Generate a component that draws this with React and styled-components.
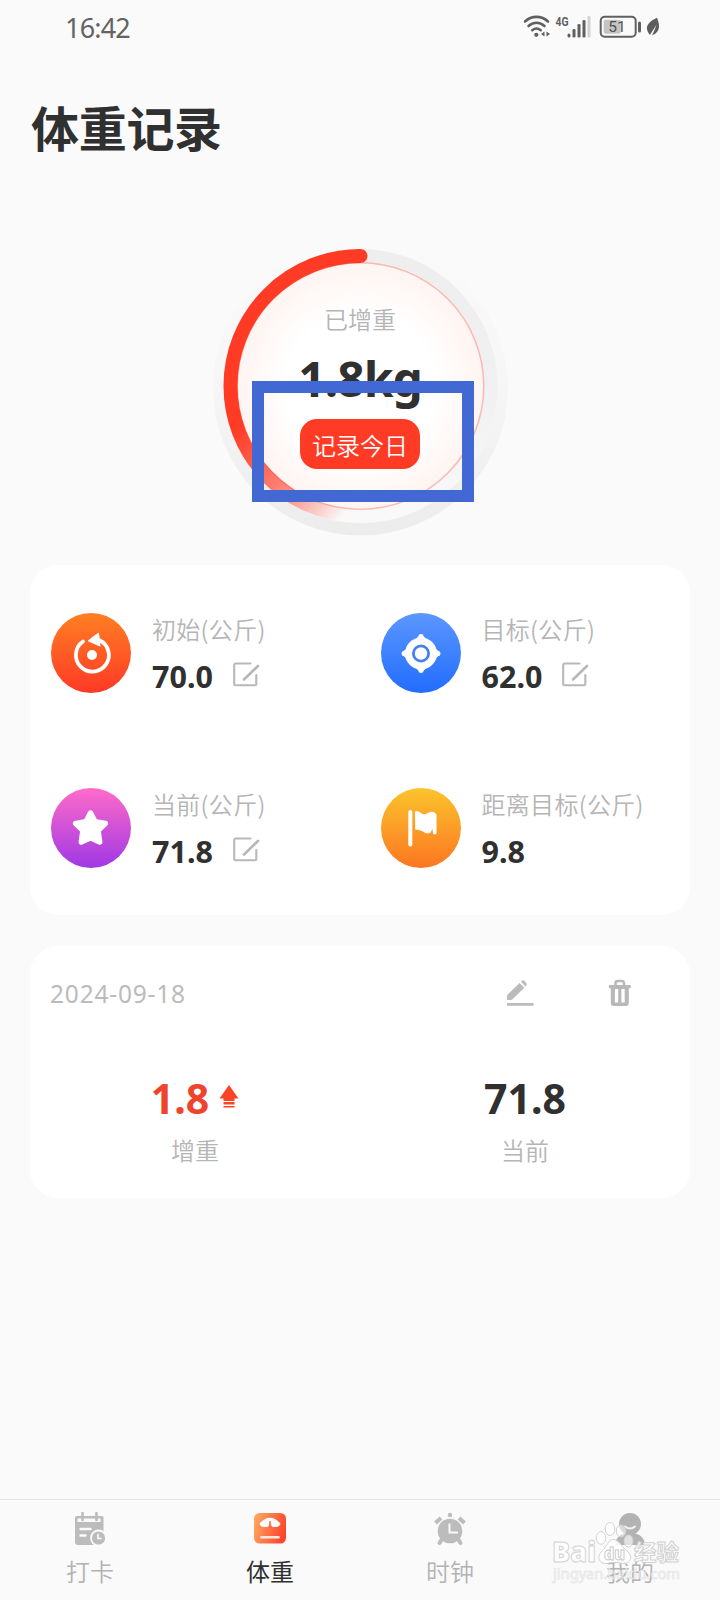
import styled, { createGlobalStyle } from "styled-components";

const GlobalStyle = createGlobalStyle`
    * {
        box-sizing: border-box;
        margin: 0;
        padding: 0;
    }

    body {
        background-color: #fafafa;
        font-family: "Noto Sans", "Noto Sans CJK SC", sans-serif;
        color: #303030;
    }
`;

const WifiIcon = () => (
  <svg width="28" height="24" viewBox="0 0 28 24" fill="none" stroke="#606060" strokeWidth="2.6" strokeLinecap="round">
    <path d="M2 6.5C8.5.3 18.5.3 25 6.5" />
    <path d="M5.5 11C10.300 6.700 16.700 6.700 21.500 11" />
    <path d="M9.300 15.200C12 13 15 13 17.700 15.200" />
    <circle cx="13.300" cy="19.800" r="2.100" fill="#606060" stroke="none" />
    <path d="M21.500 16.500v5l-3.500-2.500zM23.500 16.500v5l3.500-2.500z" fill="#606060" stroke="none" />
  </svg>
);

const SignalIcon = () => (
  <svg width="36" height="24" viewBox="0 0 36 24" overflow="visible">
    <text x="0.500" y="10.500" fontFamily="Roboto, sans-serif" fontWeight="700" fontSize="12.500" textLength="13" lengthAdjust="spacingAndGlyphs" fill="#606060">4G</text>
    <g fill="#606060">
      <rect x="12.500" y="18.500" width="3" height="4" rx="1.500" />
      <rect x="17.500" y="14" width="3" height="8.500" rx="1.300" />
      <rect x="22.500" y="9" width="3" height="13.500" rx="1.300" />
      <rect x="27.500" y="5" width="3" height="17.500" rx="1.300" />
    </g>
    <rect x="32.500" y="1" width="3" height="21.500" rx="1.300" fill="#d2d2d2" />
  </svg>
);

const BatteryIcon = () => (
  <svg width="43" height="24" viewBox="0 0 43 24">
    <rect x="1.700" y="1.700" width="35" height="20" rx="4" fill="none" stroke="#606060" strokeWidth="2" />
    <rect x="4.700" y="4.700" width="17" height="14" rx="2" fill="#c4c4c4" />
    <rect x="39" y="6.500" width="3" height="11" rx="1.500" fill="#606060" />
    <text x="18" y="17" textAnchor="middle" fontFamily="Roboto, sans-serif" fontSize="15.500" fontWeight="400" fill="#505050">51</text>
  </svg>
);

const LeafIcon = () => (
  <svg width="14" height="20" viewBox="0 0 14 20">
    <path d="M11 .8C14 8 14.500 15 6 18.500 8 14 9.500 11 10.500 7.500 8.500 11.500 6 14 4 18 -2 11 1 5.500 11 .8z" fill="#5d5d5d" />
  </svg>
);

const GaugeDrawing = () => (
  <svg width="300" height="300" viewBox="210 240 300 300">
    <defs>
      <linearGradient id="halo" x1="0" y1="0" x2="0" y2="1">
        <stop offset="0" stopColor="#fafafa" />
        <stop offset=".5" stopColor="#f6f6f6" />
        <stop offset="1" stopColor="#ececec" />
      </linearGradient>
      <linearGradient id="track" x1="0" y1="0" x2="0" y2="1">
        <stop offset="0" stopColor="#eeeeee" />
        <stop offset=".55" stopColor="#f1f1f1" />
        <stop offset="1" stopColor="#f9f9f9" />
      </linearGradient>
      <linearGradient id="progress" gradientUnits="userSpaceOnUse" x1="240" y1="425" x2="346" y2="512">
        <stop offset="0" stopColor="#ff3b25" />
        <stop offset=".6" stopColor="#ff3b25" stopOpacity=".55" />
        <stop offset="1" stopColor="#ff3b25" stopOpacity="0" />
      </linearGradient>
      <radialGradient id="face">
        <stop offset="0" stopColor="#ffffff" />
        <stop offset=".6" stopColor="#ffffff" />
        <stop offset="1" stopColor="#fff4f1" />
      </radialGradient>
    </defs>
    <circle cx="360.500" cy="388" r="147.500" fill="url(#halo)" />
    <circle cx="360.500" cy="386" r="130" fill="none" stroke="url(#track)" strokeWidth="14" />
    <circle cx="360.500" cy="386" r="123.300" fill="url(#face)" stroke="#fbb9b2" strokeWidth="1.500" />
    <path d="M360.500 256A130 130 0 0 0 230.500 386A130 130 0 0 0 354 515.800" fill="none" stroke="url(#progress)" strokeWidth="14" />
    <circle cx="360.500" cy="256" r="7" fill="#ff3b25" />
  </svg>
);

const EditIcon = () => (
  <svg width="27" height="25" viewBox="0 0 27 25" fill="none" stroke="#b8b8b8" strokeWidth="2.1" strokeLinecap="round" strokeLinejoin="round">
    <path d="M17.500 1.500H2.500Q1.200 1.500 1.200 3v19q0 1.300 1.300 1.300h19.500q1.300 0 1.300-1.300V13" />
    <path d="M11 17.500L25 4" strokeWidth="2.600" />
  </svg>
);

const StartGlyph = () => (
  <svg width="80" height="80" viewBox="0 0 80 80">
    <path d="M32 28.500A16.500 16.500 0 1 0 48.500 27.200" fill="none" stroke="#fff" strokeWidth="3.800" strokeLinecap="round" />
    <path d="M37.500 27L46.800 20Q48 19.300 48.100 20.700L49.500 32.500Q49.500 34 48.200 33.300L37.500 28.500Q36.500 27.800 37.500 27z" fill="#fff" />
    <circle cx="41" cy="42" r="5" fill="#fff" />
  </svg>
);

const TargetGlyph = () => (
  <svg width="80" height="80" viewBox="0 0 80 80">
    <circle cx="40" cy="40.500" r="16" fill="#fff" />
    <path d="M37.500 23q0-2 2.500-2t2.500 2l4 5h-13zM37.500 58q0 2 2.500 2t2.500-2l4-5h-13zM22.500 38q-2 0-2 2.500t2 2.500l5 4V34zM57.500 38q2 0 2 2.500t-2 2.500l-5 4V34z" fill="#fff" />
    <circle cx="40" cy="40.500" r="7.600" fill="none" stroke="#4580f2" strokeWidth="2.800" />
  </svg>
);

const StarGlyph = () => (
  <svg width="80" height="80" viewBox="0 0 80 80">
    <path d="M39.500 25L44 33.800 54.300 35.500 47 42.500 48.700 54 39.500 49.800 30.300 54 32 42.500 24.700 35.500 35 33.800z" fill="#fff" stroke="#fff" strokeWidth="5.500" strokeLinejoin="round" />
  </svg>
);

const FlagGlyph = () => (
  <svg width="80" height="80" viewBox="0 0 80 80" fill="#fff">
    <rect x="27.300" y="22" width="4" height="36.500" rx="2" />
    <path d="M34 23.500C38 21 40 27.500 45 26 48 24.500 52 21.500 55.500 26.500V45.500Q54 47.500 52 45.500L51.500 41 49.500 44.500Q46 47 42 43.500 38 41.500 34.200 41.500z" />
  </svg>
);

const PencilIcon = () => (
  <svg width="28" height="28" viewBox="0 0 28 28" fill="#bbbbbb">
    <path d="M1 20.500V16.300L13.600 4 18.400 8.800 6 20.800Q1 21.500 1 20.500z" />
    <path d="M15 2.700Q16.500.4 18.300 1.700L20.300 4Q21.300 6 19.500 7.500z" />
    <rect x="1" y="24" width="26.500" height="2.800" rx=".5" />
  </svg>
);

const TrashIcon = () => (
  <svg width="24" height="28" viewBox="0 0 24 28">
    <path d="M7.500 7V4.500Q7.500 2 9.500 2h4.500q2 0 2 2.500V7" fill="none" stroke="#b8b8b8" strokeWidth="2.600" />
    <rect x=".8" y="6" width="22" height="3.200" rx="1" fill="#b8b8b8" />
    <path d="M2.800 8h18v16q0 3-3 3H5.800q-3 0-3-3z" fill="#b8b8b8" />
    <path d="M6.900 10h3.300v13.500H6.900zM13.400 10h3.300v13.500h-3.300z" fill="#fff" />
  </svg>
);

const UpArrow = () => (
  <svg width="20" height="24" viewBox="0 0 20 24" fill="#fb4325">
    <path d="M10 0L19.500 13.500H.5z" />
    <path d="M4.500 12h11v4h-11zM4.500 17h11v2.400h-11zM4.500 21h11v1.500h-11z" />
  </svg>
);

const CalendarIcon = () => (
  <svg width="32" height="34" viewBox="0 0 32 34">
    <path d="M3 4h25q1.500 0 1.500 1.500V30q0 3-2 3H4q-3 0-3-3V5.500Q1 4 3 4z" fill="#bcbcbc" />
    <path d="M3.500 6.500h23V10h-23z" fill="#fafafa" />
    <path d="M8.500 1v7M22.500 1v7" stroke="#bcbcbc" strokeWidth="2.600" strokeLinecap="round" />
    <path d="M6.500 17h10M6.500 23.500h5" stroke="#fafafa" strokeWidth="2.400" strokeLinecap="round" />
    <circle cx="24.500" cy="26" r="7.500" fill="#bcbcbc" stroke="#fafafa" strokeWidth="1.800" />
    <path d="M24 22v4.500h3.500" fill="none" stroke="#fafafa" strokeWidth="1.700" />
  </svg>
);

const ScaleIcon = () => (
  <svg width="34" height="34" viewBox="0 0 34 34">
    <defs>
      <linearGradient id="scale" x1="0" y1=".2" x2="1" y2=".5">
        <stop offset="0" stopColor="#ffa864" />
        <stop offset="1" stopColor="#fb452d" />
      </linearGradient>
    </defs>
    <rect x="1" y="1" width="32" height="30.500" rx="5.500" fill="url(#scale)" />
    <path d="M6.500 11.500Q17 0 27.500 11.500 26.500 15 23 15H20Q17 13 14 15H11Q7.500 15 6.500 11.500z" fill="#fff" />
    <path d="M16 15L17 9 18.200 15z" fill="#fb6b40" stroke="#fb6b40" strokeWidth=".8" />
    <path d="M8.500 25.200h17" stroke="#ffe9dc" strokeWidth="2.600" strokeLinecap="round" />
  </svg>
);

const ClockIcon = () => (
  <svg width="34" height="34" viewBox="0 0 34 34">
    <g stroke="#bcbcbc" strokeLinecap="round">
      <path d="M9 27L6.500 31M25 27l2.500 4" strokeWidth="4" />
      <path d="M2.500 11L8 6M31.500 11L26 6" strokeWidth="4" strokeLinecap="butt" />
    </g>
    <circle cx="17" cy="3" r="2.200" fill="#bcbcbc" />
    <circle cx="17" cy="19" r="12.300" fill="#bcbcbc" />
    <path d="M16.500 11.500v9h8.500" fill="none" stroke="#fafafa" strokeWidth="2" />
  </svg>
);

const UserIcon = () => (
  <svg width="34" height="34" viewBox="0 0 34 34">
    <circle cx="17" cy="12" r="11" fill="#b3b3b3" />
    <path d="M2 33Q3 21 17 21T32 33z" fill="#b3b3b3" />
    <path d="M12 14.500q5 4 10 0" fill="none" stroke="#f2f2f2" strokeWidth="2" strokeLinecap="round" />
  </svg>
);

const WatermarkDrawing = () => (
  <svg width="140" height="84" viewBox="546 1516 140 84" fill="#ffffff" fillOpacity=".85" stroke="#d2d2d2" strokeWidth="1">
    <ellipse cx="601" cy="1538" rx="4.800" ry="6.300" />
    <ellipse cx="610" cy="1529" rx="4.800" ry="6.500" />
    <ellipse cx="621" cy="1531" rx="4.700" ry="6" fillOpacity=".5" />
    <ellipse cx="628.500" cy="1541" rx="4.500" ry="6" fillOpacity=".6" />
    <path d="M613 1539.500C619 1539.500 621 1546 627 1551 634 1557 630 1564 623 1563.500 616 1562 612 1562 607 1563.500 599 1564 596 1557 602 1551 607 1547 608 1539.500 613 1539.500z" />
    <g fontFamily='"Open Sans", sans-serif' fontWeight="800">
      <text x="552" y="1562" fontSize="29" textLength="44" lengthAdjust="spacingAndGlyphs">Bai</text>
      <text x="604" y="1560" fontSize="18" textLength="21" lengthAdjust="spacingAndGlyphs" stroke="#c8c8c8">du</text>
    </g>
    <text x="634" y="1560" fontFamily='"Noto Sans CJK SC", sans-serif' fontWeight="700" fontSize="22" textLength="45" lengthAdjust="spacingAndGlyphs">经验</text>
    <text x="553" y="1579" fontFamily='"Noto Sans", sans-serif' fontSize="14.500" fillOpacity=".7" strokeOpacity=".45" textLength="127" lengthAdjust="spacingAndGlyphs">jingyan.baidu.com</text>
  </svg>
);

const stats = [
  { label: "初始(公斤)", value: "70.0", from: "#ff7f23", to: "#ff3926", editable: true, Glyph: StartGlyph },
  { label: "目标(公斤)", value: "62.0", from: "#5b97ff", to: "#226dff", editable: true, Glyph: TargetGlyph },
  { label: "当前(公斤)", value: "71.8", from: "#ff6bc9", to: "#a038e4", editable: true, Glyph: StarGlyph },
  { label: "距离目标(公斤)", value: "9.8", from: "#fbc42c", to: "#fc7622", editable: false, Glyph: FlagGlyph },
];

const tabs = [
  { label: "打卡", Icon: CalendarIcon },
  { label: "体重", Icon: ScaleIcon, active: true },
  { label: "时钟", Icon: ClockIcon },
  { label: "我的", Icon: UserIcon },
];

const App = () => {
  return (
    <Screen>
      <GlobalStyle />
      <StatusBar>
        <Time>16:42</Time>
        <StatusIcons>
          <WifiIcon />
          <SignalIcon />
          <BatteryIcon />
          <LeafIcon />
        </StatusIcons>
      </StatusBar>

      <Title>体重记录</Title>

      <Gauge>
        <GaugeBackground>
          <GaugeDrawing />
        </GaugeBackground>
        <GaugeLabel>已增重</GaugeLabel>
        <GaugeValue>1.8kg</GaugeValue>
        <RecordButton>记录今日</RecordButton>
        <Highlight />
      </Gauge>

      <StatsCard>
        {stats.map(({ label, value, from, to, editable, Glyph }) => (
          <Stat key={label}>
            <Badge $from={from} $to={to}>
              <Glyph />
            </Badge>
            <div>
              <StatLabel>{label}</StatLabel>
              <StatValue>
                {value}
                {editable && <EditIcon />}
              </StatValue>
            </div>
          </Stat>
        ))}
      </StatsCard>

      <RecordCard>
        <RecordHeader>
          <RecordDate>2024-09-18</RecordDate>
          <Actions>
            <PencilIcon />
            <TrashIcon />
          </Actions>
        </RecordHeader>
        <RecordBody>
          <RecordItem>
            <RecordValue $color="#f0432d">
              1.8
              <UpArrow />
            </RecordValue>
            <RecordLabel>增重</RecordLabel>
          </RecordItem>
          <RecordItem>
            <RecordValue>71.8</RecordValue>
            <RecordLabel>当前</RecordLabel>
          </RecordItem>
        </RecordBody>
      </RecordCard>

      <TabBar>
        {tabs.map(({ label, Icon, active }) => (
          <Tab key={label} $active={active}>
            <Icon />
            {label}
          </Tab>
        ))}
        <Watermark>
          <WatermarkDrawing />
        </Watermark>
      </TabBar>
    </Screen>
  );
};

const Screen = styled.div`
    width: 720px;
    height: 1600px;
    display: flex;
    flex-direction: column;
    overflow: hidden;
`;

const StatusBar = styled.header`
    height: 54px;
    padding: 0 60px 0 65px;
    display: flex;
    align-items: center;
    justify-content: space-between;
`;

const Time = styled.span`
    padding-top: 1px;
    font-size: 27px;
    line-height: 54px;
    letter-spacing: -0.8px;
    color: #636363;
`;

const StatusIcons = styled.div`
    display: flex;
    align-items: center;
    gap: 4px;

    svg:nth-child(3) {
        margin-left: 4px;
    }
`;

const Title = styled.h1`
    margin: 39px 0 0 31px;
    height: 71px;
    font-size: 48px;
    font-weight: 700;
    line-height: 72px;
    letter-spacing: -0.3px;
`;

const Gauge = styled.section`
    position: relative;
    width: 300px;
    height: 300px;
    margin: 76px 0 0 210px;
    padding-top: 62px;
    display: flex;
    flex-direction: column;
    align-items: center;
`;

const GaugeBackground = styled.div`
    position: absolute;
    inset: 0;
    z-index: -1;
`;

const GaugeLabel = styled.p`
    font-size: 24px;
    font-weight: 350;
    line-height: 36px;
    color: #b5b5b5;
`;

const GaugeValue = styled.p`
    margin-top: 11px;
    font-size: 48px;
    font-weight: 700;
    line-height: 60px;
    letter-spacing: -1px;
`;

const RecordButton = styled.button`
    width: 120px;
    height: 50px;
    margin-top: 10px;
    padding-top: 3px;
    border: none;
    border-radius: 17px;
    background-color: #ff3b25;
    color: #fff;
    font-family: inherit;
    font-size: 24px;
    font-weight: 350;
    line-height: 47px;
    white-space: nowrap;
`;

/* callout frame drawn over the button */
const Highlight = styled.div`
    position: absolute;
    left: 42px;
    top: 141px;
    width: 222px;
    height: 121px;
    border: 12px solid #4168d3;
`;

const Card = styled.section`
    width: 660px;
    margin: 0 30px;
    border-radius: 28px;
    background-color: #fff;
`;

const StatsCard = styled(Card)`
    height: 350px;
    margin-top: 25px;
    padding: 48px 0 0 21px;
    display: grid;
    grid-template-columns: 329.5px 1fr;
    grid-template-rows: 175px 80px;
`;

const Stat = styled.div`
    display: flex;
    height: 80px;
    gap: 21px;
    white-space: nowrap;
`;

const Badge = styled.div`
    width: 80px;
    height: 80px;
    border-radius: 50%;
    background: linear-gradient(${({ $from, $to }) => `${$from}, ${$to}`});

    svg {
        display: block;
    }
`;

const StatLabel = styled.p`
    font-family: "Noto Sans CJK SC", sans-serif;
    font-size: 24px;
    font-weight: 350;
    line-height: 31px;
    letter-spacing: 0.3px;
    color: #b5b5b5;
`;

const StatValue = styled.p`
    display: flex;
    align-items: center;
    gap: 20px;
    margin-top: 12px;
    font-size: 30.5px;
    font-weight: 700;
    line-height: 40px;

    svg {
        margin-bottom: 3px;
    }
`;

const RecordCard = styled(Card)`
    height: 252px;
    margin-top: 31px;
    padding: 28px 0 0 20px;
`;

const RecordHeader = styled.div`
    display: flex;
    align-items: center;
    justify-content: space-between;
    height: 38px;
    padding-right: 58px;
`;

const RecordDate = styled.span`
    font-size: 24.5px;
    font-weight: 400;
    letter-spacing: 0.8px;
    color: #bbbbbb;
`;

const Actions = styled.div`
    display: flex;
    align-items: center;
    gap: 74px;
`;

const RecordBody = styled.div`
    display: grid;
    grid-template-columns: 330px 330px;
    margin: 56px 0 0 -20px;
`;

const RecordItem = styled.div`
    display: flex;
    flex-direction: column;
    align-items: center;
`;

const RecordValue = styled.p`
    display: flex;
    align-items: center;
    gap: 10px;
    font-size: 41px;
    font-weight: 700;
    line-height: 60px;
    color: ${({ $color }) => $color || "#303030"};

    svg {
        margin-bottom: 2px;
    }
`;

const RecordLabel = styled.p`
    margin-top: 5px;
    font-size: 24px;
    font-weight: 350;
    line-height: 36px;
    color: #b5b5b5;
`;

const TabBar = styled.nav`
    position: relative;
    height: 101px;
    margin-top: auto;
    border-top: 1px solid #e2e2e2;
    display: grid;
    grid-template-columns: repeat(4, 1fr);
`;

const Tab = styled.div`
    display: flex;
    flex-direction: column;
    align-items: center;
    gap: 8px;
    padding-top: 12px;
    font-size: 24px;
    font-weight: ${({ $active }) => ($active ? 400 : 350)};
    line-height: 36px;
    color: ${({ $active }) => ($active ? "#303030" : "#b3b3b3")};

    svg {
        height: 34px;
    }
`;

const Watermark = styled.div`
    position: absolute;
    left: 546px;
    top: 16px;
`;

export default App;
